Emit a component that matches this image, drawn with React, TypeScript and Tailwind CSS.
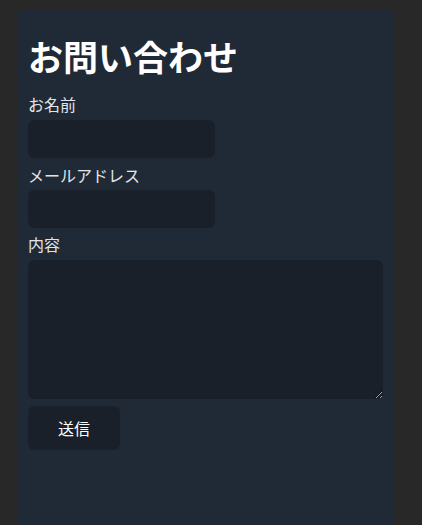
import React from "react";

const font = { fontFamily: '"Noto Sans CJK JP", "Noto Sans", sans-serif' };

export default function App() {
  return (
    <div className="min-h-[525px] bg-[#282828] pt-[10px]" style={font}>
      <div className="ml-[18px] w-[375px] min-h-[515px] rounded-t-[3px] bg-[#202a36] px-[10px] pt-[28px]">
        <h1 className="text-[35px] font-bold leading-[36px] text-white">お問い合わせ</h1>
        <form className="flex flex-col items-start" onSubmit={(e) => e.preventDefault()}>
          {/* お名前 */}
          <label className="mt-[19px] mb-[5px] block text-[16px] leading-[22px] text-[#e2e4e8]">お名前</label>
          <input className="h-[38px] w-[187px] rounded-[6px] bg-[#19202a] px-2 text-white outline-none" />

          {/* メール */}
          <label className="mt-[6px] mb-[4px] block text-[16px] leading-[22px] text-[#e2e4e8]">メールアドレス</label>
          <input className="h-[38px] w-[187px] rounded-[6px] bg-[#19202a] px-2 text-white outline-none" />

          {/* 内容 */}
          <label className="mt-[5px] mb-[5px] block text-[16px] leading-[22px] text-[#e2e4e8]">内容</label>
          <textarea className="block h-[139px] w-[355px] rounded-[6px] bg-[#19202a] p-2 text-white outline-none" />

          <button
            type="submit"
            className="mt-[7px] h-[44px] w-[92px] rounded-[6px] bg-[#19202a] text-[16px] text-white"
          >
            送信
          </button>
        </form>
      </div>
    </div>
  );
}
